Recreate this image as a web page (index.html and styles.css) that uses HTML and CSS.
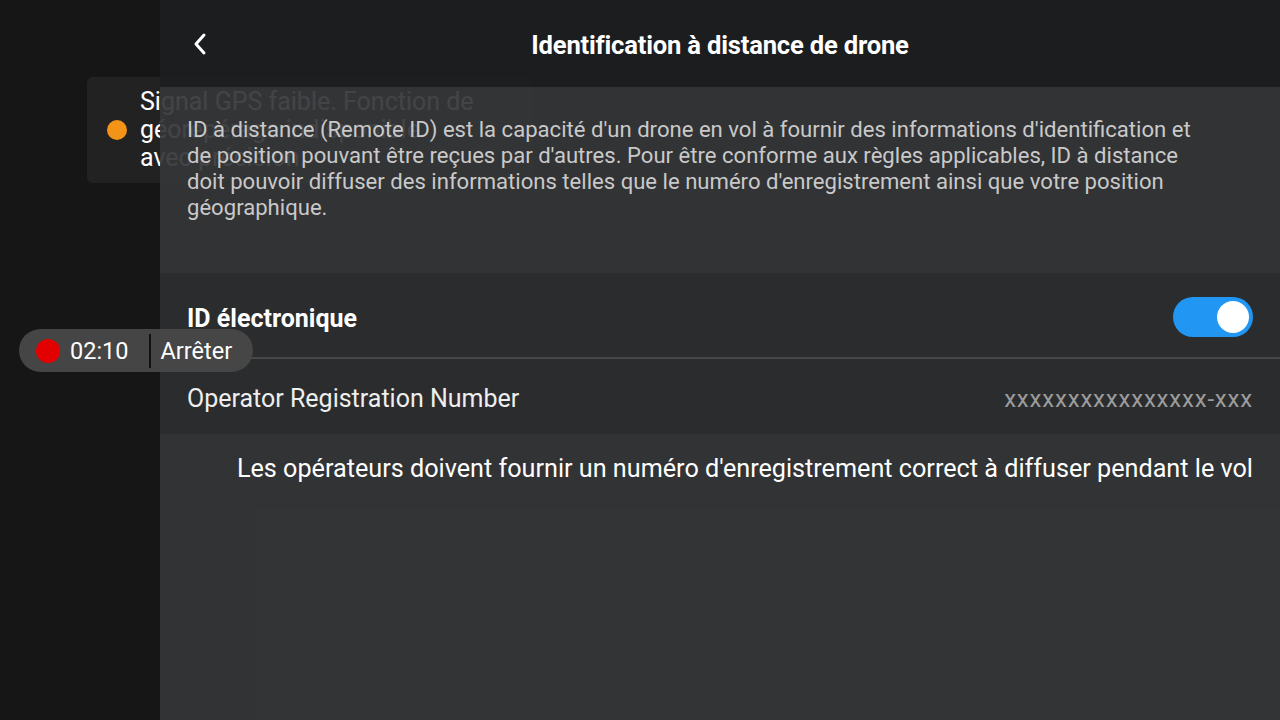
FILE: index.html
```html
<!DOCTYPE html>
<html lang="fr">
<head>
<meta charset="utf-8">
<title>Identification à distance de drone</title>
<link rel="stylesheet" href="styles.css">
</head>
<body>
<div class="app">
  <aside class="side"></aside>
  <div class="toast">
    <span class="toast-dot"></span>
    <p class="toast-text">Signal GPS faible. Fonction de<br>géorepérage indisponible<br>avec précision.</p>
  </div>
  <main class="panel">
    <header class="head">
      <button class="back" aria-label="Retour">
        <svg width="16" height="24" viewBox="0 0 16 24"><path d="M12 3 L4 12 L12 21" fill="none" stroke="#fff" stroke-width="3" stroke-linecap="round" stroke-linejoin="round"/></svg>
      </button>
      <h1 class="title">Identification à distance de drone</h1>
    </header>
    <section class="desc">
      <p>ID à distance (Remote ID) est la capacité d'un drone en vol à fournir des informations d'identification et de position pouvant être reçues par d'autres. Pour être conforme aux règles applicables, ID à distance doit pouvoir diffuser des informations telles que le numéro d'enregistrement ainsi que votre position géographique.</p>
    </section>
    <div class="row row-toggle">
      <span class="row-label bold">ID électronique</span>
      <span class="switch on"><span class="knob"></span></span>
    </div>
    <div class="row row-reg">
      <span class="row-label">Operator Registration Number</span>
      <span class="row-value">xxxxxxxxxxxxxxxx-xxx</span>
    </div>
    <section class="foot">
      <p class="note">Les opérateurs doivent fournir un numéro d'enregistrement correct à diffuser pendant le vol</p>
    </section>
  </main>
  <div class="rec">
    <span class="rec-dot"></span>
    <span class="rec-time">02:10</span>
    <span class="rec-sep"></span>
    <span class="rec-stop">Arrêter</span>
  </div>
</div>
</body>
</html>
```

FILE: styles.css
```css
* { box-sizing: border-box; }
html, body { margin: 0; padding: 0; }
body {
  width: 1280px;
  height: 720px;
  overflow: hidden;
  background: #161616;
  font-family: Roboto, "Noto Sans", "Liberation Sans", sans-serif;
  color: #fff;
}
.app {
  position: relative;
  display: flex;
  width: 1280px;
  height: 720px;
}
.side {
  width: 160px;
  flex: 0 0 160px;
  background: #161616;
}

/* toast behind the panel */
.toast {
  position: absolute;
  left: 87px;
  top: 77px;
  width: 446px;
  height: 106px;
  background: #222222;
  border-radius: 6px;
  display: flex;
  align-items: center;
  padding-left: 20px;
  gap: 13px;
  z-index: 1;
}
.toast-dot {
  width: 20px;
  height: 20px;
  border-radius: 50%;
  background: #f39419;
  flex: 0 0 20px;
}
.toast-text {
  margin: 0;
  font-size: 25px;
  line-height: 28px;
  color: #fff;
  white-space: nowrap;
}

/* settings panel */
.panel {
  position: relative;
  z-index: 2;
  flex: 1;
  display: flex;
  flex-direction: column;
}
.head {
  height: 87px;
  flex: 0 0 87px;
  background: rgba(29, 30, 32, 0.97);
  display: flex;
  align-items: center;
  justify-content: center;
  position: relative;
}
.back {
  position: absolute;
  left: 30px;
  top: 32px;
  background: none;
  border: 0;
  padding: 0;
  width: 20px;
  height: 24px;
  display: flex;
  align-items: center;
  justify-content: center;
}
.title {
  margin: 0;
  font-size: 25.6px;
  font-weight: 700;
  color: #fff;
  letter-spacing: -0.2px;
  padding-top: 2px;
}
.desc {
  height: 186px;
  flex: 0 0 186px;
  background: rgba(53, 54, 56, 0.93);
  padding: 29px 80px 0 27px;
}
.desc p {
  margin: 0;
  font-size: 22.1px;
  line-height: 26px;
  color: #c9c9c9;
}
.row {
  display: flex;
  align-items: center;
  justify-content: space-between;
  padding: 0 27px;
  background: #2b2c2e;
}
.row-toggle {
  height: 86px;
  flex: 0 0 86px;
  padding-top: 3px;
  border-bottom: 2px solid #46474a;
}
.row-toggle .row-label {
  margin-top: 4px;
}
.row-reg {
  height: 75px;
  flex: 0 0 75px;
  padding-top: 4px;
}
.row-label {
  font-size: 25px;
  color: #eeeeee;
}
.row-label.bold {
  font-weight: 700;
  color: #fff;
}
.row-value {
  font-size: 24px;
  color: #9c9c9c;
  letter-spacing: 0.8px;
}
.switch {
  width: 80px;
  height: 40px;
  border-radius: 20px;
  background: #2196f3;
  display: flex;
  align-items: center;
  justify-content: flex-end;
  padding-right: 4px;
}
.knob {
  width: 32px;
  height: 32px;
  border-radius: 50%;
  background: #fff;
}
.foot {
  flex: 1;
  background: rgba(52, 53, 55, 0.97);
  padding: 21px 27px 0 27px;
}
.note {
  margin: 0;
  text-align: right;
  font-size: 25.2px;
  line-height: 28px;
  color: #fff;
  white-space: nowrap;
}

/* recording pill */
.rec {
  position: absolute;
  left: 19px;
  top: 329px;
  width: 234px;
  height: 43px;
  border-radius: 22px;
  background: rgba(72, 72, 72, 0.95);
  display: flex;
  align-items: center;
  padding-left: 17px;
  z-index: 3;
}
.rec-dot {
  width: 24px;
  height: 24px;
  border-radius: 50%;
  background: #e30000;
  flex: 0 0 24px;
}
.rec-time {
  margin-left: 10px;
  font-size: 23.5px;
  color: #fff;
}
.rec-sep {
  width: 2px;
  height: 34px;
  background: #111;
  margin-left: 20px;
}
.rec-stop {
  margin-left: 10px;
  font-size: 23.5px;
  color: #fff;
}
```
